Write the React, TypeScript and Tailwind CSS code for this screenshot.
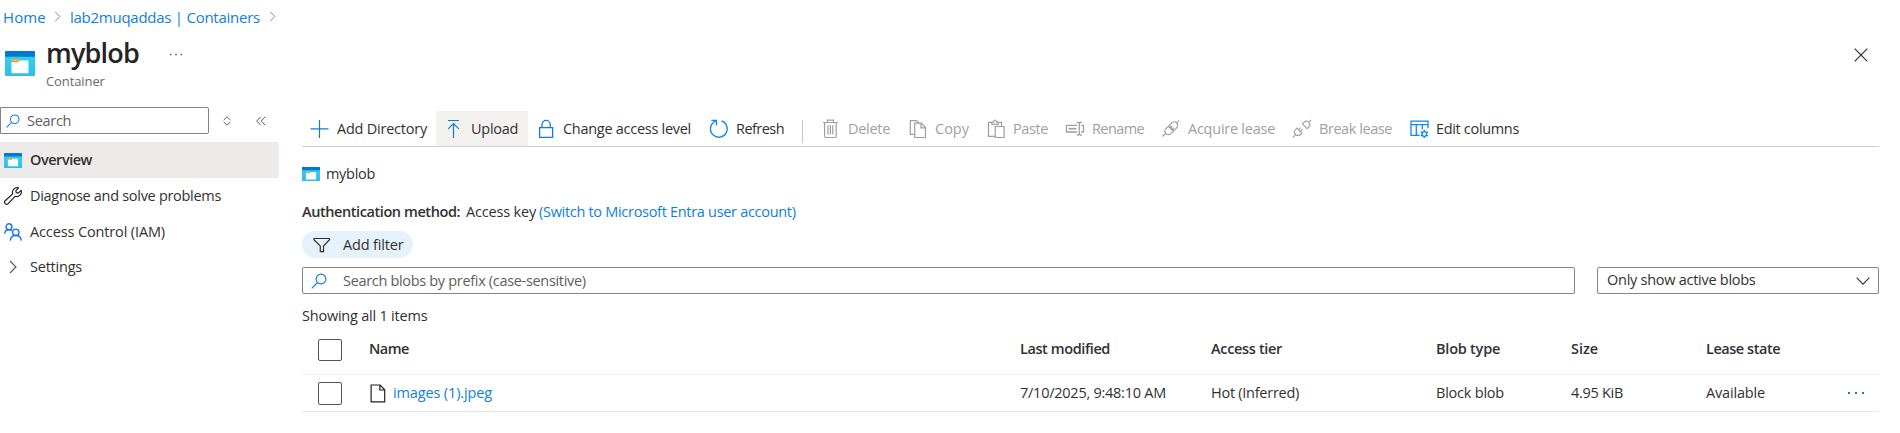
import React from "react";

type IconProps = { className?: string };

const stroke = { fill: "none", stroke: "currentColor" } as const;

function ContainerIcon({ className = "" }: IconProps) {
  return (
    <svg viewBox="0 0 30 24" preserveAspectRatio="none" className={className}>
      <defs>
        <linearGradient id="cyan" x1="0" y1="0" x2="0" y2="1">
          <stop offset="0" stopColor="#32d4f5" />
          <stop offset="1" stopColor="#2fbfe0" />
        </linearGradient>
      </defs>
      <rect width="30" height="24" rx="1" fill="url(#cyan)" />
      <path d="M1 0h28a1 1 0 0 1 1 1v4.5H0V1a1 1 0 0 1 1-1z" fill="#0078d4" />
      <path d="M6.5 9.2q0-1.2 1.2-1.2h5.6q1 0 1 1.2h8.4q.8 0 .8.8v10.4q0 .9-.8.9H7.4q-.9 0-.9-.9z" fill="#fff" />
      <path d="M6.500 9.200q0-1.200 1.200-1.200h5.600q1.300.2 1 1.300l-1.600 1.500H6.500z" fill="#f7931e" />
      <path d="M8.200 9.200h4" stroke="#ffd9a8" strokeWidth=".7" />
    </svg>
  );
}

function Chevron({ className = "" }: IconProps) {
  return (
    <svg viewBox="0 0 8 14" className={className} {...stroke} strokeWidth="1.1">
      <path d="M1 1l6 6-6 6" />
    </svg>
  );
}

function Magnifier({ className = "" }: IconProps) {
  return (
    <svg viewBox="0 0 16 16" className={className} {...stroke} strokeWidth="1.15">
      <circle cx="10" cy="6" r="4.9" />
      <path d="M6.500 9.500L.7 15.300" />
    </svg>
  );
}

function Wrench() {
  return (
    <svg viewBox="0 0 18 18" className="size-[18px] text-[#222]" {...stroke} strokeWidth="1.2" strokeLinejoin="round">
      <path d="M14.600.900A4.700 4.700 0 0 0 8.700 6.900L1.200 13.700a2.050 2.050 0 0 0 3 3l6.900-7.400a4.700 4.700 0 0 0 6-6l-2.900 2.900-1.900-.500-.500-1.900z" />
    </svg>
  );
}

function People() {
  return (
    <svg viewBox="0 0 18 18" className="size-[18px] text-[#1a73e8]" {...stroke} strokeWidth="1.4">
      <circle cx="5" cy="3.7" r="2.9" />
      <path d="M.7 10.800C.8 8.200 2.600 6.700 5 6.700c1.100 0 2.100.3 2.900 1" />
      <circle cx="11.800" cy="9.300" r="3.200" />
      <path d="M6.300 17.600c.2-3.200 2.500-5.100 5.500-5.100s5.200 1.900 5.500 5.100" />
    </svg>
  );
}

function Plus() {
  return (
    <svg viewBox="0 0 20 20" className="size-5 text-[#0f7dd8]" {...stroke}>
      <path d="M9.500 1v18M.5 9.800h18" strokeWidth="1.200" />
    </svg>
  );
}

function UploadArrow() {
  return (
    <svg viewBox="0 0 20 20" className="size-5 text-[#0f7dd8]" {...stroke} strokeWidth="1.200">
      <path d="M4 1.500h11M9.500 19V4.500M4.200 9.800l5.300-5.300 5.300 5.300" />
    </svg>
  );
}

function Lock() {
  return (
    <svg viewBox="0 0 20 20" className="size-5 text-[#0f7dd8]" {...stroke} strokeWidth="1.300">
      <path d="M3.600 8.700h13v9.700h-13zM6 8.700V5.500a4.100 4.100 0 0 1 8.200 0v3.200" />
    </svg>
  );
}

function RefreshIcon() {
  return (
    <svg viewBox="0 0 20 20" className="size-5 text-[#0f8ae8]" {...stroke} strokeWidth="1.300">
      <path d="M12.600 1.900A8.400 8.400 0 1 1 4.800 3.100L7.200 1.400" />
      <path d="M2.300 1.400h5.200v5.200" />
    </svg>
  );
}

function Trash() {
  return (
    <svg viewBox="0 0 20 20" className="size-5" {...stroke} strokeWidth="1.200">
      <path d="M2 3.500h15M6.500 3.300V1.200h6v2.100M3.600 3.500v13.800q0 1.200 1.200 1.200h9.200q1.200 0 1.200-1.200V3.500M7 6.300v9.200M9.400 6.300v9.200M11.800 6.300v9.200" />
    </svg>
  );
}

function CopyIcon() {
  return (
    <svg viewBox="0 0 20 20" className="size-5" {...stroke} strokeWidth="1.200">
      <path d="M6.700 15.400H2.300V1.600h6.200l2.700 2.600" />
      <path d="M6.700 4.200h6.500l4.300 4.300v10H6.700zM13 4.400v4.400h4.400" />
    </svg>
  );
}

function PasteIcon() {
  return (
    <svg viewBox="0 0 20 20" className="size-5" {...stroke} strokeWidth="1.200">
      <path d="M9 17.400H2.500V3.400h3.700M12 3.400h3.500v4M5.900 5.300V3.200h1.700q.2-2 1.500-2t1.500 2h1.700v2.100z" />
      <path d="M9.200 7.500h8.900v11H9.200z" />
    </svg>
  );
}

function RenameIcon() {
  return (
    <svg viewBox="0 0 20 20" className="size-5" {...stroke} strokeWidth="1.300">
      <path d="M12.300 6.300H1.500v6.700h10.800M16.300 6.300h2.200v6.700h-2.200M11.700 3.200q2.600 0 2.600 1.800v9.400q0 1.800-2.600 1.800M16.900 3.200q-2.600 0-2.600 1.800M16.900 16.200q-2.600 0-2.600-1.800" />
      <path d="M3.700 9.700h7.700" strokeWidth="1.700" />
    </svg>
  );
}

function PlugJoined() {
  return (
    <svg viewBox="0 0 20 20" className="size-5" {...stroke} strokeWidth="1.150">
      <path d="M1.500 17.500l3-3M15.300 4.200l2.900-2.900M7.300 7.300L5 9.600a3.500 3.500 0 0 0 5 5l2.300-2.300zM8.200 6.300l2.300-2.300a3.500 3.500 0 0 1 5 5l-2.300 2.300zM9.100 9.200l2.100-2.100M10.700 10.800l2.100-2.100" />
    </svg>
  );
}

function PlugSplit() {
  return (
    <svg viewBox="0 0 20 20" className="size-5" {...stroke} strokeWidth="1.150">
      <path d="M1 18.500l2.300-2.300M17.200 2.900l2-2M5 9.100l-1.500 1.500a3.400 3.400 0 0 0 4.900 4.900l1.500-1.500zM10.300 4.800l1.500-1.500a3.400 3.400 0 0 1 4.900 4.900l-1.500 1.500zM6.700 10.600l2-2M8.500 12.400l2-2" />
    </svg>
  );
}

function ColumnsIcon() {
  return (
    <svg viewBox="0 0 20 20" className="size-5 text-[#0f8ae8]" {...stroke} strokeWidth="1.300">
      <path d="M10.500 16.300H2V2.200h17v7M2 5.600h17M7.300 5.600v10.700M13.300 5.600v5" />
      <circle cx="15.300" cy="15" r="2.300" />
      <path strokeWidth="1.500" d="M15.300 11v1.700M15.300 17.300V19M11.800 13l1.500.9M17.300 16.100l1.500.9M11.800 17l1.500-.9M17.300 13.900l1.500-.9" />
    </svg>
  );
}

function Funnel() {
  return (
    <svg viewBox="0 0 18 16" className="h-4 w-[18px] text-[#323130]" {...stroke} strokeWidth="1.200">
      <path d="M1 1.500h15.500v1.200L10.500 9v5.700H7.300V9L1 2.700z" />
    </svg>
  );
}

function FileIcon() {
  return (
    <svg viewBox="0 0 16 19" className="h-[19px] w-4 text-[#222]" {...stroke} strokeWidth="1.200">
      <path d="M1.100 1h9l4.600 4.800v12H1.100zM9.900 1v5h4.800" />
    </svg>
  );
}

function Dots({ className = "" }: IconProps) {
  return (
    <svg viewBox="0 0 18 4" className={className} fill="currentColor">
      <rect x="1" y="1" width="2" height="2" />
      <rect x="8" y="1" width="2" height="2" />
      <rect x="15" y="1" width="2" height="2" />
    </svg>
  );
}

type ToolProps = { icon: React.ReactNode; label: string; className: string; disabled?: boolean };

function Tool({ icon, label, className, disabled }: ToolProps) {
  return (
    <button
      disabled={disabled}
      className={`flex h-[35px] shrink-0 items-center gap-[7px] pl-2 whitespace-nowrap ${disabled ? "text-[#a19f9d]" : "text-[#323130]"} ${className}`}
    >
      <span className="shrink-0">{icon}</span>
      {label}
    </button>
  );
}

const columns = "grid grid-cols-[67px_651px_191px_225px_135px_135px_141px_1fr] items-center";

function Checkbox({ className }: { className: string }) {
  return <span role="checkbox" aria-checked="false" className={`ml-4 block w-6 rounded-[2px] border border-[#55534f] ${className}`} />;
}

export default function App() {
  return (
    <div className="flex h-[433px] w-[1900px] flex-col overflow-hidden bg-white font-['Open_Sans','Noto_Sans',sans-serif] text-[14.5px] leading-5 text-[#323130]">
      <nav className="flex h-[33px] items-center pl-[3px] text-[15px] whitespace-nowrap text-[#1080d8]">
        <a className="w-[42px] tracking-[0.1px]">Home</a>
        <Chevron className="ml-[9px] h-[11px] w-[7px] text-[#777]" />
        <a className="ml-[9px] w-[190px] tracking-[-0.26px]">lab2muqaddas | Containers</a>
        <Chevron className="ml-[9px] h-[11px] w-[7px] text-[#777]" />
      </nav>

      <header className="flex h-[74px] items-start pt-[1px] pl-[5px]">
        <ContainerIcon className="mt-[17px] h-[25px] w-[30px]" />
        <div className="ml-[11px]">
          <div className="flex">
            <h1 className="w-[123px] text-[27px] leading-[38px] font-semibold tracking-[-0.8px] text-[#242424]">myblob</h1>
            <Dots className="mt-[19px] h-[3px] w-[14px] text-[#605e5c]" />
          </div>
          <p className="text-[13px] leading-[18px] tracking-[-0.1px] text-[#6b6967]">Container</p>
        </div>
        <svg viewBox="0 0 14 14" className="mt-[14px] mr-8 ml-auto size-[14px] text-[#323130]" {...stroke} strokeWidth="1.200">
          <path d="M.7.7l12.600 12.600M13.300.7L.7 13.300" />
        </svg>
      </header>

      <div className="flex">
        <aside className="w-[279px] shrink-0">
          <div className="flex h-[27px] items-center">
            <div className="flex h-[27px] w-[209px] items-center rounded-r-[2px] border border-[#868482] pl-[5px]">
              <Magnifier className="size-[14px] text-[#0f7dd8]" />
              <span className="ml-[7px] tracking-[-0.3px] text-[#605e5c]">Search</span>
            </div>
            <svg viewBox="0 0 8 10" className="ml-[14px] h-[10px] w-2 text-[#605e5c]" {...stroke}>
              <path d="M.7 4L4 .8 7.300 4M.7 6L4 9.200 7.300 6" />
            </svg>
            <svg viewBox="0 0 10 10" className="ml-[25px] size-[10px] text-[#605e5c]" {...stroke}>
              <path d="M4.700.8L.7 5l4 4.200M9.200.8L5.200 5l4 4.200" />
            </svg>
          </div>
          <ul className="mt-2 whitespace-nowrap">
            <li className="flex h-9 items-center bg-[#edebe9] pl-1 font-semibold">
              <ContainerIcon className="h-[15px] w-[18px]" />
              <span className="ml-2 tracking-[-0.47px]">Overview</span>
            </li>
            <li className="flex h-9 items-center pl-1">
              <Wrench />
              <span className="ml-2 tracking-[-0.3px]">Diagnose and solve problems</span>
            </li>
            <li className="flex h-[35px] items-center pl-1">
              <People />
              <span className="ml-2 tracking-[-0.13px]">Access Control (IAM)</span>
            </li>
            <li className="flex h-9 items-center pl-[9px]">
              <Chevron className="h-[14px] w-2 text-[#555]" />
              <span className="ml-[13px] tracking-[-0.22px]">Settings</span>
            </li>
          </ul>
        </aside>

        <main className="ml-[23px] w-[1577px] pt-1">
          <div className="flex h-9 border-b border-[#d2d0ce]">
            <Tool icon={<Plus />} label="Add Directory" className="w-[134px] tracking-[-0.23px]" />
            <Tool icon={<UploadArrow />} label="Upload" className="w-[92px] bg-[#f3f2f1] tracking-[-0.28px]" />
            <Tool icon={<Lock />} label="Change access level" className="w-[173px] tracking-[-0.28px]" />
            <Tool icon={<RefreshIcon />} label="Refresh" className="w-[101px] tracking-[-0.54px]" />
            <span className="mt-[9px] mr-[10px] h-[23px] w-px bg-[#c8c6c4]" />
            <Tool disabled icon={<Trash />} label="Delete" className="w-[87px] tracking-[-0.3px]" />
            <Tool disabled icon={<CopyIcon />} label="Copy" className="w-[78px]" />
            <Tool disabled icon={<PasteIcon />} label="Paste" className="w-[79px] tracking-[-0.4px]" />
            <Tool disabled icon={<RenameIcon />} label="Rename" className="w-[96px] tracking-[-0.6px]" />
            <Tool disabled icon={<PlugJoined />} label="Acquire lease" className="w-[131px] tracking-[-0.25px]" />
            <Tool disabled icon={<PlugSplit />} label="Break lease" className="w-[117px] tracking-[-0.44px]" />
            <Tool icon={<ColumnsIcon />} label="Edit columns" className="w-[130px] tracking-[-0.33px]" />
          </div>

          <div className="mt-[17px] flex h-5 items-center">
            <ContainerIcon className="h-[14px] w-[18px]" />
            <span className="ml-[6px] tracking-[-0.3px]">myblob</span>
          </div>

          <div className="mt-[18px] flex h-5 items-center whitespace-nowrap">
            <span className="w-[164px] font-semibold tracking-[-0.42px]">Authentication method:</span>
            <span className="w-[73px] tracking-[-0.18px]">Access key</span>
            <a className="tracking-[-0.3px] text-[#1080d8]">(Switch to Microsoft Entra user account)</a>
          </div>

          <button className="mt-[9px] flex h-[27px] w-[111px] items-center rounded-full bg-[#e5f1fb] pl-[11px]">
            <Funnel />
            <span className="ml-3 tracking-[-0.15px]">Add filter</span>
          </button>

          <div className="mt-[9px] flex h-[27px] justify-between">
            <div className="flex w-[1273px] items-center rounded-[2px] border border-[#868482] pl-2">
              <Magnifier className="size-4 text-[#0f7dd8]" />
              <span className="ml-4 tracking-[-0.32px] text-[#605e5c]">Search blobs by prefix (case-sensitive)</span>
            </div>
            <div className="flex w-[282px] items-center justify-between rounded-[2px] border border-[#868482] pr-2 pl-[9px]">
              <span className="-mt-px tracking-[-0.27px]">Only show active blobs</span>
              <svg viewBox="0 0 14 8" className="h-2 w-[14px]" {...stroke} strokeWidth="1.100">
                <path d="M.6.7L7 7.100 13.400.7" />
              </svg>
            </div>
          </div>

          <p className="mt-3 h-5 tracking-[-0.22px]">Showing all 1 items</p>

          <div className={`${columns} mt-[1px] h-[48px] border-b border-[#f0efee] pb-[3px] font-semibold whitespace-nowrap`}>
            <Checkbox className="mt-[2px] h-[22px]" />
            <span className="tracking-[-0.5px]">Name</span>
            <span className="tracking-[-0.41px]">Last modified</span>
            <span className="tracking-[-0.33px]">Access tier</span>
            <span className="tracking-[-0.23px]">Blob type</span>
            <span className="tracking-[-0.06px]">Size</span>
            <span className="tracking-[-0.46px]">Lease state</span>
          </div>
          <div className={`${columns} h-[37px] border-b border-[#e6e5e4] pb-px whitespace-nowrap`}>
            <Checkbox className="mt-px h-[23px]" />
            <span className="flex items-center pt-px pl-px">
              <FileIcon />
              <a className="ml-[7px] tracking-[-0.14px] text-[#1080d8]">images (1).jpeg</a>
            </span>
            <span className="tracking-[-0.25px]">7/10/2025, 9:48:10 AM</span>
            <span className="tracking-[-0.26px]">Hot (Inferred)</span>
            <span className="tracking-[-0.22px]">Block blob</span>
            <span className="tracking-[-0.29px]">4.95 KiB</span>
            <span className="tracking-[-0.17px]">Available</span>
            <Dots className="h-1 w-[18px] text-[#0f7dd8]" />
          </div>
        </main>
      </div>
    </div>
  );
}
